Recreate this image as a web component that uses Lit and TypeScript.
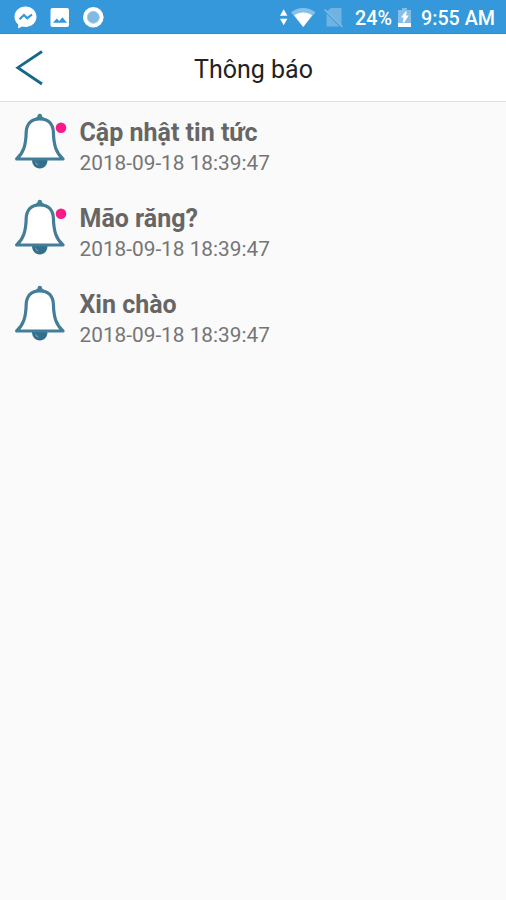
import { LitElement, html, svg, css, nothing } from "lit";
import { customElement, property } from "lit/decorators.js";

const FONT = css`Roboto, "Noto Sans", sans-serif`;

@customElement("status-bar")
class StatusBar extends LitElement {
  static styles = css`
    :host { display: flex; height: 34px; background: #3498db; color: #fff; font: 500 19.7px/33px ${FONT}; box-sizing: border-box; border-bottom: 1px solid #3190d0; }
    svg { display: block; flex: none; }
    .right { margin-left: auto; display: flex; }
    .pct { width: 42px; white-space: nowrap; padding-top: 2px; }
    .time { width: 85px; white-space: nowrap; padding-top: 2px; }
  `;
  render() {
    return html`
      <svg width="120" height="33" viewBox="0 0 120 33">
        <path fill="#fff" d="M25.5 6.500c-6.200 0-11 4.500-11 10.300 0 3.200 1.400 5.800 3.700 7.700v4l3.700-2.100c1.100.3 2.300.5 3.600.5 6.200 0 11-4.400 11-10.100S31.700 6.500 25.500 6.500z"/>
        <path fill="none" stroke="#3498db" stroke-width="2.200" d="M19.500 19.300l4.500-4.300 3.200 3.200 4.800-3.700"/>
        <rect x="50.500" y="8" width="18.500" height="19" rx="2" fill="#fff"/>
        <path fill="#3498db" d="M53 22.800l3.700-4.300 2.500 2.500 3.300-3.800 4.500 5.600z"/>
        <circle cx="93.300" cy="17.300" r="10.300" fill="#fff"/>
        <circle cx="93.300" cy="17.300" r="6" fill="#80b9e2" stroke="#a9d1ee" stroke-width="1"/>
      </svg>
      <div class="right">
        <svg width="77" height="33" viewBox="278 0 77 33">
          <path fill="#fff" d="M283.700 9.300l3.700 6.500h-7.400zM283.700 25.300l3.700-6.500h-7.400z"/>
          <path fill="#86c1ea" d="M291 12.300c7.500-5.700 17-5.700 24.500 0L303.200 27z"/>
          <path fill="#fff" d="M294.200 15.300c5.500-3.800 12.500-3.800 18 0L303.200 27z"/>
          <path fill="#6fb3e2" d="M331 8h10.500v17.500L326.500 11.500zM326.500 13.500l13 13h-13z"/>
          <path stroke="#83bce3" stroke-width="1.500" d="M324.500 9.500l18 17.500"/>
        </svg>
        <span class="pct">24%</span>
        <svg width="24" height="33" viewBox="397 0 24 33">
          <path fill="#85bfe8" d="M402 8h5v2h4v13h-13V10h4z"/>
          <path fill="#fff" d="M398 23h13v4h-13zM405.500 11.500l-4.500 6h2.700l-1 5h1.500l4.500-7h-2.700l.8-4z"/>
        </svg>
        <span class="time">9:55 AM</span>
      </div>`;
  }
}

@customElement("title-bar")
class TitleBar extends LitElement {
  static styles = css`
    :host { display: grid; grid-template-columns: 60px 1fr 60px; height: 68px; box-sizing: border-box; background: #fff; border-bottom: 1px solid #dedede; border-top: 1px solid #f0f9ff; }
    .title { margin: 0; text-align: center; color: #222; font: 400 25px/69px ${FONT}; text-indent: 1px; white-space: nowrap; }
  `;
  render() {
    return html`
      <svg width="60" height="65" viewBox="0 35 60 65"><path fill="none" stroke="#17678a" stroke-width="2.800" d="M42 51.500L17.800 67.700l24.200 16.300"/></svg>
      <h1 class="title">Thông báo</h1>`;
  }
}

const unreadDot = () => svg`<circle cx="61" cy="127.200" r="5.300" fill="#fa1a8a"/>`;

@customElement("notice-row")
class NoticeRow extends LitElement {
  @property() heading = "";
  @property() time = "";
  @property({ type: Boolean }) unread = false;
  static styles = css`
    :host { display: flex; height: 86px; font-family: ${FONT}; }
    svg { flex: none; }
    .text { white-space: nowrap; margin-left: -0.5px; }
    .heading { margin-top: 15px; font-size: 25px; line-height: 32px; font-weight: 700; color: #666; }
    .time { font-size: 20.8px; line-height: 29px; color: #757575; }
  `;
  render() {
    return html`
      <svg width="80" height="80" viewBox="0 101.500 80 80">
        <path fill="#326f8a" d="M32 159h15.500c0 5.500-3 9-7.700 9s-7.800-3.500-7.800-9z"/>
        <path fill="#6c9db2" d="M35 160.500l4 4.500-3-1z"/>
        <path fill="#fff" stroke="#447d97" stroke-width="3.200" stroke-linejoin="round" d="M39.800 118.300c-8.500 0-13.300 5-13.600 13.500-.3 13-2.700 20.500-9.600 26.700h46.400c-6.900-6.200-9.300-13.700-9.600-26.700-.3-8.500-5.100-13.500-13.600-13.500z"/>
        <path fill="#447d97" d="M39.800 113.300c1.600 0 2.200 1.200 2.400 2.700l4 3.500h-12.800l4-3.500c.2-1.500.8-2.700 2.400-2.700z"/>
        ${this.unread ? unreadDot() : nothing}
      </svg>
      <div class="text">
        <div class="heading">${this.heading}</div>
        <div class="time">${this.time}</div>
      </div>`;
  }
}

@customElement("app-root")
class AppRoot extends LitElement {
  static styles = css`
    :host { display: flex; flex-direction: column; height: 900px; background: #fafafa; overflow: hidden; }
    status-bar, title-bar, notice-row { flex: none; }
  `;
  private notices = [
    { heading: "Cập nhật tin tức", time: "2018-09-18 18:39:47", unread: true },
    { heading: "Mão răng?", time: "2018-09-18 18:39:47", unread: true },
    { heading: "Xin chào", time: "2018-09-18 18:39:47", unread: false },
  ];
  render() {
    return html`
      <status-bar></status-bar>
      <title-bar></title-bar>
      ${this.notices.map((n) => html`<notice-row .heading=${n.heading} .time=${n.time} .unread=${n.unread}></notice-row>`)}`;
  }
}
